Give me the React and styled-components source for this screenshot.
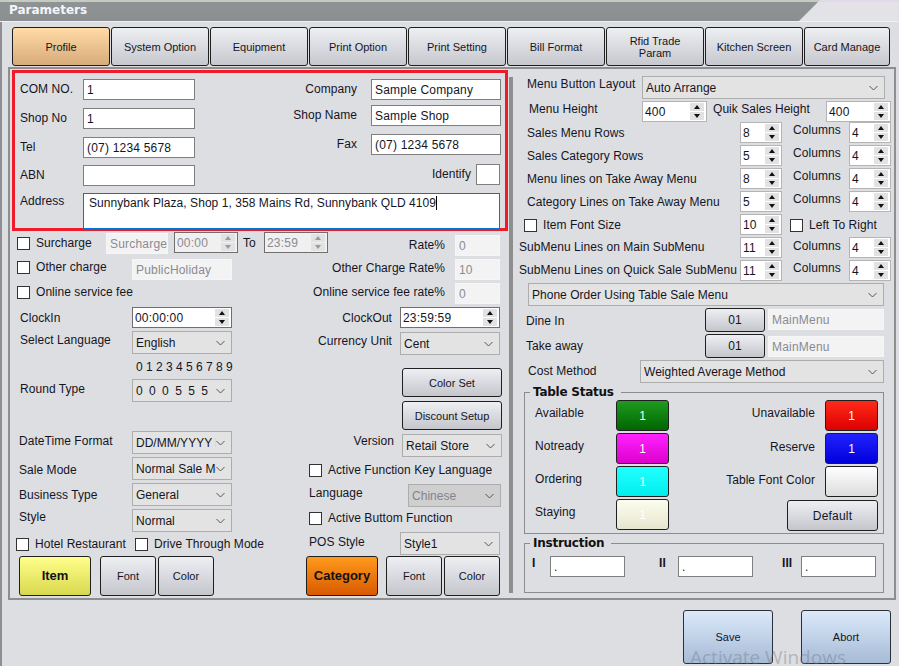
import React from "react";
import styled, { createGlobalStyle, css } from "styled-components";

const Global = createGlobalStyle`
  html, body { margin: 0; padding: 0; background: #dddee2; }
  body { width: 899px; height: 666px; overflow: hidden; }
`;

const place = css`
  flex: none;
  margin-top: ${(p) => p.$t || 0}px;
  margin-left: ${(p) => p.$l || 0}px;
  margin-right: ${(p) => p.$r || 0}px;
`;

const Window = styled.div`
  position: relative;
  width: 899px;
  height: 666px;
  overflow: hidden;
  background: #dddee2;
  font-family: "Liberation Sans", Arial, sans-serif;
  font-size: 12px;
  letter-spacing: 0.05px;
  color: #15151f;
`;
const TitleStrip = styled.div`
  height: 21px;
  background: linear-gradient(#e4d9ea 0 2px, #e3e3e7 2px);
  border-bottom: 1px solid #f0f0f2;
  box-sizing: content-box;
`;
const TitleBar = styled.div`
  height: 21px;
  padding: 3px 0 0 9px;
  box-sizing: border-box;
  clip-path: polygon(0 0, 820px 0, 799px 21px, 0 21px);
  background: linear-gradient(#c6cbc2 0 2px, #8f9395 2px, #8b8f91 100%);
  font-family: "DejaVu Sans", sans-serif;
  font-size: 12px;
  font-weight: 700;
  line-height: 15px;
  letter-spacing: 0;
  color: #f4f6f8;
`;
const Body = styled.div`
  height: 644px;
  box-shadow: inset 2px 0 0 #8e8e94;
`;
const TabRow = styled.div`
  display: flex;
  gap: 1px;
  height: 45px;
  padding: 5px 0 0 12px;
  box-sizing: border-box;
`;
const buttonBase = css`
  ${place}
  display: flex;
  align-items: center;
  justify-content: center;
  text-align: center;
  box-sizing: border-box;
  width: ${(p) => p.$w}px;
  height: ${(p) => p.$h}px;
  border: 1px solid #1f1f1f;
  border-radius: 3px;
  font-size: 11px;
  line-height: 12px;
  letter-spacing: 0;
`;
const Tab = styled.div`
  ${buttonBase}
  background: ${(p) =>
    p.$active
      ? "linear-gradient(#ffdba6, #d8ab7a)"
      : "linear-gradient(#eeeff3, #c6c8ce)"};
`;
const Button = styled.div`
  ${buttonBase}
  font-size: ${(p) => p.$fs || 11}px;
  letter-spacing: ${(p) => (p.$fs ? 0.2 : 0)}px;
  background: linear-gradient(#eeeff3, #c4c6cc);
`;
const Colored = styled.div`
  ${buttonBase}
  font-size: ${(p) => (p.$bold ? 13 : 12)}px;
  font-weight: ${(p) => (p.$bold ? 700 : 400)};
  color: ${(p) => p.$fg || "#111"};
  background: linear-gradient(${(p) => p.$from}, ${(p) => p.$to});
`;
const Panel = styled.div`
  display: flex;
  width: 888px;
  height: 533px;
  margin-left: 8px;
  border: 2px solid #8e8e8e;
  box-sizing: border-box;
`;
const LeftCol = styled.div`
  width: 499px;
  flex: none;
`;
const Divider = styled.div`
  width: 4px;
  flex: none;
  margin: 8px 0 5px;
  background: #8e8e8e;
`;
const RightCol = styled.div`
  flex: 1;
  padding-top: 7px;
`;
const RedBox = styled.div`
  width: 496px;
  height: 161px;
  margin: 1px 0 0 2px;
  border: 3px solid #ee1c2a;
  box-sizing: border-box;
  padding: 6px 4px 0 5px;
`;
const Split = styled.div`
  display: flex;
  justify-content: space-between;
`;
const Stack = styled.div`
  ${place}
  display: flex;
  flex-direction: column;
  gap: ${(p) => p.$gap || 0}px;
`;
const Row = styled.div`
  display: flex;
  align-items: flex-start;
  justify-content: space-between;
  height: ${(p) => p.$h}px;
  padding-left: ${(p) => p.$pl ?? 9}px;
  padding-right: ${(p) => p.$pr ?? 9}px;
`;
const Group = styled.div`
  ${place}
  display: flex;
  align-items: flex-start;
  gap: ${(p) => p.$gap || 0}px;
  width: ${(p) => (p.$w ? `${p.$w}px` : "auto")};
  justify-content: ${(p) => (p.$between ? "space-between" : "flex-end")};
`;
const LeftGroup = styled(Group)`
  justify-content: flex-start;
`;
const Label = styled.span`
  ${place}
  display: block;
  line-height: 14px;
  white-space: nowrap;
  ${(p) => p.$w && `width: ${p.$w}px;`}
  ${(p) => p.$bold && "font-weight: 700;"}
`;
const Digits = styled.div`
  margin: 1px 0 0 126px;
  line-height: 14px;
  letter-spacing: 0;
`;
const TextBox = styled.div`
  ${place}
  box-sizing: border-box;
  width: ${(p) => p.$w}px;
  height: ${(p) => p.$h || 21}px;
  padding: 0 3px;
  line-height: 20px;
  letter-spacing: 0.2px;
  white-space: nowrap;
  overflow: hidden;
  border: 1px solid ${(p) => (p.$off ? "#f6f6f6" : p.$active ? "#0078d7" : "#7f7f7f")};
  background: ${(p) => (p.$off ? "#f3f3f4" : "#fff")};
  color: ${(p) => (p.$off ? "#8a8a92" : "inherit")};
`;
const AddressText = styled.div`
  padding-left: 2px;
  line-height: 19px;
  letter-spacing: 0.06px;
`;
const Caret = styled.span`
  display: inline-block;
  width: 1px;
  height: 14px;
  vertical-align: -3px;
  background: #000;
`;
const SpinBox = styled.div`
  ${place}
  display: flex;
  align-items: center;
  justify-content: space-between;
  box-sizing: border-box;
  width: ${(p) => p.$w}px;
  height: 21px;
  padding: 0 1px 0 2px;
  letter-spacing: 0.2px;
  border: 1px solid ${(p) => (p.$dark ? "#6f6f6f" : "#b4b4b4")};
  background: ${(p) => (p.$off ? "#f0f0f1" : "#fff")};
  color: ${(p) => (p.$off ? "#8a8a92" : "inherit")};
`;
const SpinButtons = styled.div`
  display: flex;
  flex-direction: column;
  gap: 1px;
  width: 14px;
  height: 17px;
  margin-right: 1px;
`;
const SpinButton = styled.div`
  flex: 1;
  display: flex;
  align-items: center;
  justify-content: center;
  background: #e2e2e3;
`;
const Arrow = styled.span`
  width: 0;
  height: 0;
  border-left: 3.5px solid transparent;
  border-right: 3.5px solid transparent;
  ${(p) => (p.$down ? "border-top" : "border-bottom")}: 4px solid ${(p) => (p.$off ? "#9a9a9a" : "#111")};
`;
const ComboBox = styled.div`
  ${place}
  display: flex;
  align-items: center;
  box-sizing: border-box;
  width: ${(p) => p.$w}px;
  height: 23px;
  padding: 0 6px 0 3px;
  letter-spacing: 0.02px;
  border: 1px solid #adadad;
  background: ${(p) => (p.$off ? "#cfcfcf" : "#e3e3e3")};
  color: ${(p) => (p.$off ? "#83838a" : "inherit")};
`;
const ComboText = styled.div`
  flex: 1;
  min-width: 0;
  padding-right: 5px;
  overflow: hidden;
  white-space: nowrap;
`;
const ComboSpread = styled.span`
  word-spacing: 3px;
`;
const CheckWrap = styled.div`
  ${place}
  display: flex;
  align-items: center;
  gap: 6px;
  line-height: 13px;
  white-space: nowrap;
  ${(p) => p.$w && `width: ${p.$w}px;`}
`;
const CheckBox = styled.span`
  width: 13px;
  height: 13px;
  flex: none;
  box-sizing: border-box;
  border: 1px solid #333;
  background: #fff;
`;
const GroupBox = styled.div`
  position: relative;
  width: 360px;
  height: ${(p) => p.$h}px;
  margin: ${(p) => p.$mt}px 0 0 11px;
  padding: ${(p) => p.$pt}px 5px 0 10px;
  box-sizing: border-box;
  border: 1px solid #8c8c8c;
`;
const Legend = styled.div`
  position: absolute;
  top: -8px;
  left: 5px;
  padding: 0 7px 0 3px;
  background: #dddee2;
  font-family: "DejaVu Sans", sans-serif;
  font-size: 12px;
  font-weight: 700;
  line-height: 15px;
  letter-spacing: -0.25px;
  color: #111;
`;
const StatusRow = styled.div`
  display: flex;
  align-items: flex-start;
  justify-content: space-between;
  height: 33px;
`;
const Instruction = styled.div`
  display: flex;
  align-items: flex-start;
  margin-left: -3px;
`;
const Footer = styled.div`
  position: relative;
  display: flex;
  justify-content: flex-end;
  gap: 28px;
  padding: 10px 8px 0 0;
`;
const BigButton = styled.div`
  ${buttonBase}
  background: linear-gradient(#dbe9fb, #a7bbd6);
  border-color: #2a2f38;
`;
const Watermark = styled.div`
  position: absolute;
  left: 690px;
  top: 45px;
  font-family: "Open Sans", sans-serif;
  font-size: 19px;
  line-height: 24px;
  letter-spacing: 0;
  white-space: nowrap;
  color: rgba(110, 112, 125, 0.4);
  pointer-events: none;
`;
const ChevronIcon = styled.svg`
  flex: none;
`;

const Chevron = () => (
  <ChevronIcon width="9" height="6" viewBox="0 0 9 6">
    <path d="M0.5 1 L4.5 5 L8.5 1" fill="none" stroke="#555" strokeWidth="1" />
  </ChevronIcon>
);

const Spin = ({ value, w = 42, dark, off, t, l, r }) => (
  <SpinBox $w={w} $dark={dark} $off={off} $t={t} $l={l} $r={r}>
    <span>{value}</span>
    <SpinButtons>
      <SpinButton><Arrow $off={off} /></SpinButton>
      <SpinButton><Arrow $down $off={off} /></SpinButton>
    </SpinButtons>
  </SpinBox>
);

const Combo = ({ children, w = 100, t, l, r, off }) => (
  <ComboBox $w={w} $t={t} $l={l} $r={r} $off={off}>
    <ComboText>{children}</ComboText>
    <Chevron />
  </ComboBox>
);

const Check = ({ children, $t, $l, $w }) => (
  <CheckWrap $t={$t} $l={$l} $w={$w}>
    <CheckBox />
    {children}
  </CheckWrap>
);

const tabs = [
  "System Option",
  "Equipment",
  "Print Option",
  "Print Setting",
  "Bill Format",
  <>Rfid Trade<br />Param</>,
  "Kitchen Screen",
];

const ProfileBox = () => (
  <RedBox>
    <Split>
      <Stack>
        <Row $h={29} $pl={0} $pr={0}>
          <LeftGroup>
            <Label $w={63} $t={3}>COM NO.</Label>
            <TextBox $w={112}>1</TextBox>
          </LeftGroup>
        </Row>
        <Row $h={29} $pl={0} $pr={0}>
          <LeftGroup>
            <Label $w={63} $t={3}>Shop No</Label>
            <TextBox $w={112}>1</TextBox>
          </LeftGroup>
        </Row>
        <Row $h={28} $pl={0} $pr={0}>
          <LeftGroup>
            <Label $w={63} $t={3}>Tel</Label>
            <TextBox $w={112}>(07) 1234 5678</TextBox>
          </LeftGroup>
        </Row>
        <Row $h={28} $pl={0} $pr={0}>
          <LeftGroup>
            <Label $w={63} $t={3}>ABN</Label>
            <TextBox $w={112} />
          </LeftGroup>
        </Row>
      </Stack>
      <Stack>
        <Row $h={26} $pl={0} $pr={0}>
          <Group $w={200} $gap={14}>
            <Label $t={3}>Company</Label>
            <TextBox $w={130}>Sample Company</TextBox>
          </Group>
        </Row>
        <Row $h={29} $pl={0} $pr={0}>
          <Group $w={200} $gap={14}>
            <Label $t={3}>Shop Name</Label>
            <TextBox $w={130}>Sample Shop</TextBox>
          </Group>
        </Row>
        <Row $h={30} $pl={0} $pr={0}>
          <Group $w={200} $gap={14}>
            <Label $t={3}>Fax</Label>
            <TextBox $w={130}>(07) 1234 5678</TextBox>
          </Group>
        </Row>
        <Row $h={29} $pl={0} $pr={1}>
          <Group $w={199} $gap={5}>
            <Label $t={3}>Identify</Label>
            <TextBox $w={24} />
          </Group>
        </Row>
      </Stack>
    </Split>
    <LeftGroup>
      <Label $w={63} $t={1}>Address</Label>
      <TextBox $w={417} $h={36} $active>
        <AddressText>
          Sunnybank Plaza, Shop 1, 358 Mains Rd, Sunnybank QLD 4109<Caret />
        </AddressText>
      </TextBox>
    </LeftGroup>
  </RedBox>
);

const LeftForm = () => (
  <>
    <Row $h={28} $pl={7}>
      <LeftGroup>
        <Check $w={89} $t={6}>Surcharge</Check>
        <TextBox $w={62} $t={2} $off>Surcharge</TextBox>
        <Spin w={64} value="00:00" dark off t={1} l={6} />
        <Label $w={21} $t={5} $l={5}>To</Label>
        <Spin w={64} value="23:59" dark off t={1} />
      </LeftGroup>
      <Group $gap={10}>
        <Label $t={7}>Rate%</Label>
        <TextBox $w={45} $t={4} $off>0</TextBox>
      </Group>
    </Row>
    <Row $h={24} $pl={7}>
      <LeftGroup>
        <Check $w={115} $t={2}>Other charge</Check>
        <TextBox $w={100} $off>PublicHoliday</TextBox>
      </LeftGroup>
      <Group $gap={10}>
        <Label $t={2}>Other Charge Rate%</Label>
        <TextBox $w={45} $off>10</TextBox>
      </Group>
    </Row>
    <Row $h={24} $pl={7}>
      <Check $t={3}>Online service fee</Check>
      <Group $gap={10}>
        <Label $t={2}>Online service fee rate%</Label>
        <TextBox $w={45} $off>0</TextBox>
      </Group>
    </Row>
    <Row $h={24}>
      <LeftGroup>
        <Label $w={112} $t={4} $l={1}>ClockIn</Label>
        <Spin w={100} value="00:00:00" dark />
      </LeftGroup>
      <Group $gap={8}>
        <Label $t={4}>ClockOut</Label>
        <Spin w={100} value="23:59:59" dark />
      </Group>
    </Row>
    <Row $h={28}>
      <LeftGroup>
        <Label $w={112} $t={2} $l={1}>Select Language</Label>
        <Combo>English</Combo>
      </LeftGroup>
      <Group $gap={8}>
        <Label $t={3}>Currency Unit</Label>
        <Combo t={1}>Cent</Combo>
      </Group>
    </Row>
    <Row $h={72} $pl={0} $pr={7}>
      <Stack>
        <Digits>0 1 2 3 4 5 6 7 8 9</Digits>
        <LeftGroup $t={5} $l={10}>
          <Label $w={112} $t={3}>Round Type</Label>
          <Combo><ComboSpread>0 0 0 5 5 5</ComboSpread></Combo>
        </LeftGroup>
      </Stack>
      <Stack $t={9} $gap={4}>
        <Button $w={100} $h={29}>Color Set</Button>
        <Button $w={100} $h={29}>Discount Setup</Button>
      </Stack>
    </Row>
    <Row $h={26} $pr={7}>
      <LeftGroup>
        <Label $w={113} $t={3}>DateTime Format</Label>
        <Combo>DD/MM/YYYY HH:mm</Combo>
      </LeftGroup>
      <Group $gap={8}>
        <Label $t={3}>Version</Label>
        <Combo t={3}>Retail Store</Combo>
      </Group>
    </Row>
    <Row $h={26}>
      <LeftGroup>
        <Label $w={113} $t={6}>Sale Mode</Label>
        <Combo>Normal Sale Mode</Combo>
      </LeftGroup>
      <Group $w={191} $between>
        <Check $t={7}>Active Function Key Language</Check>
      </Group>
    </Row>
    <Row $h={26} $pr={8}>
      <LeftGroup>
        <Label $w={113} $t={5}>Business Type</Label>
        <Combo>General</Combo>
      </LeftGroup>
      <Group $w={192} $between>
        <Label $t={3}>Language</Label>
        <Combo w={93} t={1} off>Chinese</Combo>
      </Group>
    </Row>
    <Row $h={23}>
      <LeftGroup>
        <Label $w={113} $t={1}>Style</Label>
        <Combo>Normal</Combo>
      </LeftGroup>
      <Group $w={191} $between>
        <Check $t={3}>Active Buttom Function</Check>
      </Group>
    </Row>
    <Row $h={24} $pl={6}>
      <LeftGroup>
        <Check $w={119} $t={6}>Hotel Restaurant</Check>
        <Check $t={6}>Drive Through Mode</Check>
      </LeftGroup>
      <Group $w={191} $between>
        <Label $t={3}>POS Style</Label>
        <Combo>Style1</Combo>
      </Group>
    </Row>
    <Row $h={40}>
      <LeftGroup>
        <Colored $w={72} $h={40} $bold $from="#ffff8c" $to="#d8d84e">Item</Colored>
        <Button $w={56} $h={40} $l={9}>Font</Button>
        <Button $w={56} $h={40} $l={2}>Color</Button>
      </LeftGroup>
      <Group>
        <Colored $w={72} $h={40} $bold $from="#ff9a1c" $to="#d85a00">Category</Colored>
        <Button $w={56} $h={40} $l={8}>Font</Button>
        <Button $w={56} $h={40} $l={2}>Color</Button>
      </Group>
    </Row>
  </>
);

const countRows = [
  ["Sales Menu Rows", "8", 1],
  ["Sales Category Rows", "5", 1],
  ["Menu lines on Take Away Menu", "8", 1],
  ["Category Lines on Take Away Menu", "5", 1],
];

const CountRow = ({ label, value, colT }) => (
  <Row $h={23} $pl={14} $pr={3}>
    <LeftGroup>
      <Label $w={213} $t={4}>{label}</Label>
      <Spin value={value} />
      <Label $w={56} $t={colT} $l={11}>Columns</Label>
      <Spin value="4" />
    </LeftGroup>
  </Row>
);

const swatches = [
  ["Available", "#1f9a1f", "#006600", "#fff", "Unavailable", "#ff2a1a", "#dd0000", "#fff", 6],
  ["Notready", "#ff22ff", "#dd00cc", "#fff", "Reserve", "#2222ff", "#0000dd", "#fff", 7],
  ["Ordering", "#22ffff", "#00eeee", "#fff", "Table Font Color", "#ffffff", "#dcdcdc", "#fff", 7],
];

const RightForm = () => (
  <>
    <Row $h={25} $pl={14} $pr={0}>
      <LeftGroup>
        <Label $w={115} $t={1}>Menu Button Layout</Label>
        <Combo w={243}>Auto Arrange</Combo>
      </LeftGroup>
    </Row>
    <Row $h={21} $pl={16} $pr={0}>
      <LeftGroup>
        <Label $w={113} $t={1}>Menu Height</Label>
        <Spin w={65} value="400" />
        <Label $w={113} $l={6} $t={1}>Quik Sales Height</Label>
        <Spin w={65} value="400" />
      </LeftGroup>
    </Row>
    {countRows.map(([label, value, colT]) => (
      <CountRow key={label} label={label} value={value} colT={colT} />
    ))}
    <Row $h={23} $pl={11} $pr={0}>
      <LeftGroup>
        <Check $w={216} $t={5}>Item Font Size</Check>
        <Spin value="10" />
        <Check $t={5} $l={8}>Left To Right</Check>
      </LeftGroup>
    </Row>
    <Row $h={23} $pl={6} $pr={0}>
      <LeftGroup>
        <Label $w={221} $t={3}>SubMenu Lines on Main SubMenu</Label>
        <Spin value="11" />
        <Label $w={56} $t={2} $l={11}>Columns</Label>
        <Spin value="4" />
      </LeftGroup>
    </Row>
    <Row $h={23} $pl={6} $pr={0}>
      <LeftGroup>
        <Label $w={221} $t={3}>SubMenu Lines on Quick Sale SubMenu</Label>
        <Spin value="11" />
        <Label $w={56} $t={1} $l={11}>Columns</Label>
        <Spin value="4" />
      </LeftGroup>
    </Row>
    <Row $h={25} $pl={15} $pr={0}>
      <Combo w={356}>Phone Order Using Table Sale Menu</Combo>
    </Row>
    <Row $h={26} $pl={13} $pr={0}>
      <LeftGroup>
        <Label $w={179} $t={6}>Dine In</Label>
        <Button $w={60} $h={24} $fs={12}>01</Button>
        <TextBox $w={116} $t={1} $l={3} $off>MainMenu</TextBox>
      </LeftGroup>
    </Row>
    <Row $h={26} $pl={13} $pr={0}>
      <LeftGroup>
        <Label $w={179} $t={5}>Take away</Label>
        <Button $w={60} $h={24} $fs={12}>01</Button>
        <TextBox $w={116} $t={2} $l={3} $off>MainMenu</TextBox>
      </LeftGroup>
    </Row>
    <Row $h={26} $pl={15} $pr={0}>
      <LeftGroup>
        <Label $w={112} $t={4}>Cost Method</Label>
        <Combo w={244}>Weighted Average Method</Combo>
      </LeftGroup>
    </Row>
    <GroupBox $h={142} $mt={6} $pt={7}>
      <Legend>Table Status</Legend>
      {swatches.map(([a, af, at, afg, b, bf, bt, bfg, bT]) => (
        <StatusRow key={a}>
          <LeftGroup>
            <Label $w={81} $t={6}>{a}</Label>
            <Colored $w={53} $h={31} $from={af} $to={at} $fg={afg}>1</Colored>
          </LeftGroup>
          <Group $gap={10}>
            <Label $t={bT}>{b}</Label>
            <Colored $w={53} $h={31} $from={bf} $to={bt} $fg={bfg}>{b === "Table Font Color" ? "" : "1"}</Colored>
          </Group>
        </StatusRow>
      ))}
      <StatusRow>
        <LeftGroup>
          <Label $w={81} $t={6}>Staying</Label>
          <Colored $w={53} $h={31} $from="#fdfdee" $to="#e6e6cf" $fg="#fff">1</Colored>
        </LeftGroup>
        <Button $w={91} $h={31} $t={1} $fs={12}>Default</Button>
      </StatusRow>
    </GroupBox>
    <GroupBox $h={50} $mt={9} $pt={12}>
      <Legend>Instruction</Legend>
      <Instruction>
        <Label $w={18} $t={0} $bold>I</Label>
        <TextBox $w={75}>.</TextBox>
        <Label $w={19} $l={34} $bold>II</Label>
        <TextBox $w={75}>.</TextBox>
        <Label $w={19} $l={29} $bold>III</Label>
        <TextBox $w={75}>.</TextBox>
      </Instruction>
    </GroupBox>
  </>
);

export default function App() {
  return (
    <Window>
      <Global />
      <TitleStrip>
        <TitleBar>Parameters</TitleBar>
      </TitleStrip>
      <Body>
        <TabRow>
          <Tab $w={98} $h={39} $active>Profile</Tab>
          {tabs.map((t, i) => (
            <Tab key={i} $w={98} $h={39}>{t}</Tab>
          ))}
          <Tab $w={86} $h={39}>Card Manage</Tab>
        </TabRow>
        <Panel>
          <LeftCol>
            <ProfileBox />
            <LeftForm />
          </LeftCol>
          <Divider />
          <RightCol>
            <RightForm />
          </RightCol>
        </Panel>
        <Footer>
          <BigButton $w={90} $h={54}>Save</BigButton>
          <BigButton $w={90} $h={54}>Abort</BigButton>
          <Watermark>Activate Windows</Watermark>
        </Footer>
      </Body>
    </Window>
  );
}
